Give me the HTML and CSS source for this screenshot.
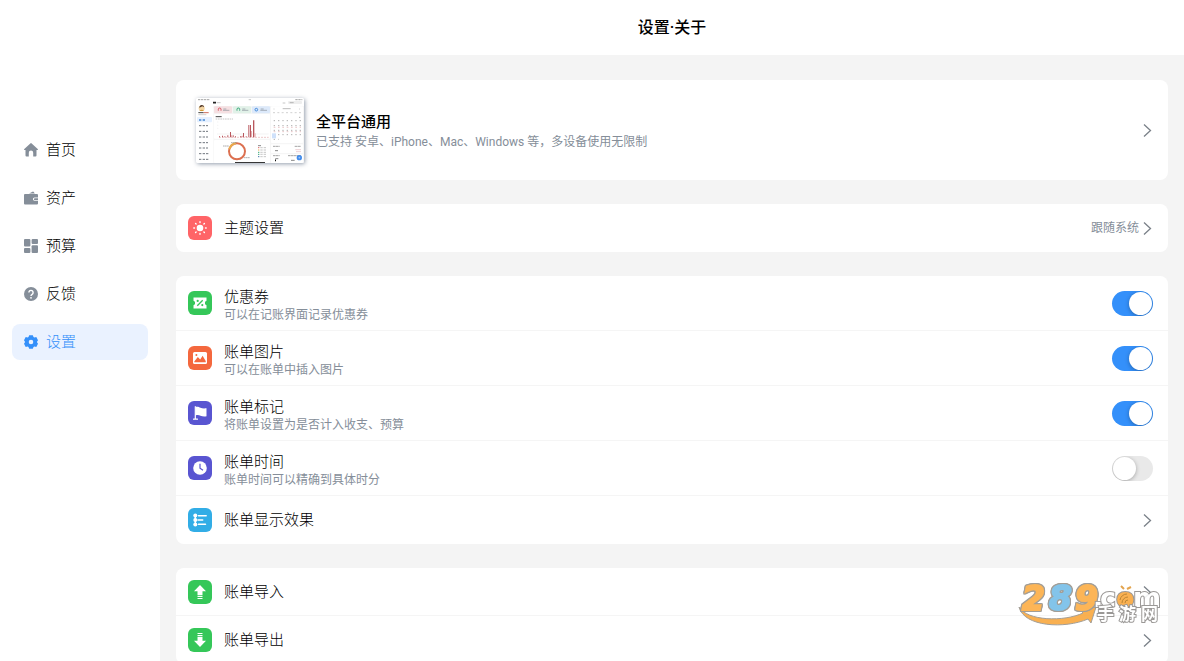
FILE: index.html
```html
<!DOCTYPE html>
<html lang="zh-CN">
<head>
    <meta charset="UTF-8">
    <meta name="viewport" content="width=device-width, initial-scale=1.0">
    <title>设置·关于</title>
    <link rel="stylesheet" href="styles.css">
</head>
<body>
    <!-- Shared arrow -->
    <svg class="defs" width="0" height="0" aria-hidden="true">
        <symbol id="chevron" viewBox="0 0 14 16">
            <path d="M5 2.500l6.500 6L5 14.500" fill="none" stroke="#7a8088" stroke-width="1.300"/>
        </symbol>
    </svg>

    <!-- Sidebar -->
    <nav class="sidebar">
        <a class="nav-item" href="#">
            <svg class="nav-icon" viewBox="0 0 14 14" fill="currentColor"><path d="M6.300.4a1 1 0 0 1 1.400 0l6 5.500c.5.5.2 1.100-.4 1.100h-.8v5.500a1 1 0 0 1-1 1H9.200V9.800a2.200 2.200 0 0 0-4.400 0v3.700H2.500a1 1 0 0 1-1-1V7H.7C.1 7-.2 6.400.3 5.900z"/></svg>
            首页
        </a>
        <a class="nav-item" href="#">
            <svg class="nav-icon" viewBox="0 0 14 14" fill="currentColor"><path d="M5 2.500L8.500.7a1 1 0 0 1 1.300.3l1 1.500z"/><path d="M1 3h12a1 1 0 0 1 1 1v2.500h-3.500a1.600 1.600 0 0 0 0 3.200H14v2.800a1 1 0 0 1-1 1H1a1 1 0 0 1-1-1V4a1 1 0 0 1 1-1z"/><path d="M10.800 7.300H14V9h-3.200a.85.85 0 0 1 0-1.700z"/></svg>
            资产
        </a>
        <a class="nav-item" href="#">
            <svg class="nav-icon" viewBox="0 0 14 14" fill="currentColor"><rect width="6.400" height="7.500" rx="1"/><rect x="7.600" width="6.400" height="5" rx="1"/><rect y="8.900" width="6.400" height="5.100" rx="1"/><rect x="7.600" y="6.300" width="6.400" height="7.700" rx="1"/></svg>
            预算
        </a>
        <a class="nav-item" href="#">
            <svg class="nav-icon" viewBox="0 0 14 14"><circle cx="7" cy="7" r="7" fill="currentColor"/><path d="M4.900 5.500a2.100 2.100 0 1 1 3.200 1.800C7.300 7.800 7 8 7 8.900" fill="none" stroke="#fff" stroke-width="1.400"/><circle cx="7" cy="10.800" r=".9" fill="#fff"/></svg>
            反馈
        </a>
        <a class="nav-item active" href="#">
            <svg class="nav-icon" viewBox="0 0 14 14" fill="currentColor"><path fill-rule="evenodd" d="M5.200.2h3.600l.7 1.700.9.500 1.900-.3 1.700 3.100L12.900 7l1.100 1.800-1.700 3.100-1.900-.3-.9.500-.7 1.700H5.200l-.7-1.700-.9-.5-1.900.3L0 8.800 1.100 7 0 5.200l1.700-3.100 1.900.3.900-.5zM7 4.700a2.300 2.300 0 1 0 0 4.600 2.300 2.300 0 0 0 0-4.600z"/></svg>
            设置
        </a>
    </nav>

    <div class="page">
        <header class="page-header">
            <h1>设置·关于</h1>
        </header>

        <main class="content">
            <!-- Platforms -->
            <section class="card">
                <a class="platform" href="#">
                    <svg class="preview" viewBox="0 0 324 195" aria-hidden="true">
                        <rect width="324" height="195" fill="#fff"/>
                        <path d="M52 24h272v171H52z" fill="#f6f6f6"/>
                        <g fill="#fff"><rect x="54" y="48" width="168" height="74" rx="3"/><rect x="54" y="126" width="168" height="69" rx="3"/><rect x="225" y="25" width="96" height="110" rx="3"/><rect x="225" y="139" width="96" height="26" rx="3"/><rect x="225" y="169" width="96" height="26" rx="3"/></g>
                        <path d="M6 5h36M298 5h21" stroke="#777" stroke-width="2" stroke-dasharray="7 2"/>
                        <path d="M158 5h7M62 14h12M260 15h8" stroke="#aaa" stroke-width="2"/>
                        <path d="M51 14h9" stroke="#222" stroke-width="5"/>
                        <rect x="276" y="9" width="42" height="9" rx="3" fill="#eee"/>
                        <path d="M281 14h12" stroke="#999" stroke-width="2"/>
                        <!-- profile and menu -->
                        <circle cx="17" cy="31" r="9" fill="#f2d4a2"/>
                        <path d="M10 29c0-10 14-10 14-1l-5-3z" fill="#4b3328"/>
                        <path d="M10 39q7-7 14 0z" fill="#d79b32"/>
                        <path d="M7 44h16" stroke="#444" stroke-width="3"/><path d="M23 44h15" stroke="#cf6c5b" stroke-width="3"/><path d="M7 50h24" stroke="#bbb" stroke-width="2"/>
                        <rect x="3" y="57" width="45" height="16" rx="3" fill="#e5f0ff"/>
                        <path d="M9 66h7m4 0h7" stroke="#4488d5" stroke-width="4"/>
                        <path d="M9 83h7m4 0h16M9 100h7m4 0h16M9 117h7m4 0h16M9 134h7m4 0h16M9 150h7m4 0h16M9 167h7m4 0h20M9 184h7m4 0h17" stroke="#70767e" stroke-width="3" stroke-dasharray="7 3"/>
                        <!-- totals -->
                        <rect x="54" y="25" width="54" height="21" rx="3" fill="#f5e0e2"/><rect x="111" y="25" width="54" height="21" rx="3" fill="#e1f1e8"/><rect x="168" y="25" width="54" height="21" rx="3" fill="#dce9fa"/>
                        <g fill="none" stroke-width="3"><path d="M67 38v-4a4 4 0 0 1 8 0v4" stroke="#d65461"/><path d="M123 38v-4a4 4 0 0 1 8 0v4" stroke="#35a877"/><circle cx="181" cy="35" r="4" stroke="#458bdc"/></g>
                        <path d="M82 33h9m-10 4h19M139 33h9m-10 4h19M194 33h9m-10 4h20" stroke="#89919a" stroke-width="2"/>
                        <!-- bars -->
                        <path d="M59 56h18" stroke="#444" stroke-width="3"/><path d="M59 63h52" stroke="#aaa" stroke-width="2" stroke-dasharray="5 2"/>
                        <path d="M63 72h4M63 82h4M63 91h4M63 108h4M68 108h150" stroke="#ddd" stroke-width="1"/>
                        <path d="M69 118h149" stroke="#ecc9ca" stroke-width="3" stroke-dasharray="6 3"/>
                        <g fill="#b9575d"><path d="M69 115h3v3h-3zM78 113h3v5h-3zM85 115h3v3h-3zM94 112h3v6h-3zM102 102h3v16h-3zM110 112h3v6h-3zM117 115h3v3h-3zM132 115h5v3h-5zM141 105h3v13h-3zM149 115h3v3h-3zM157 81h3v37h-3zM162 81h3v37h-3zM171 67h4v51h-4z"/></g>
                        <path d="M105 112h3v6h-3zM137 113h4v5h-4zM165 99h3v19h-3zM175 106h4v12h-4z" fill="#e6b0b3"/>
                        <!-- ring -->
                        <circle cx="123" cy="160" r="24" fill="none" stroke="#dc7050" stroke-width="6"/>
                        <path d="M100 154a24 24 0 0 1 20-18" fill="none" stroke="#e9ac4d" stroke-width="6"/>
                        <path d="M81 144h18M105 134h18M144 179h17" stroke="#888" stroke-width="2" stroke-dasharray="5 1"/>
                        <g stroke-width="3"><path d="M186 143h9" stroke="#888"/><path d="M186 149h4" stroke="#d66"/><path d="M186 156h4" stroke="#e9ac4d"/><path d="M186 163h4" stroke="#39a679"/><path d="M186 169h4" stroke="#39a679"/><path d="M186 176h4" stroke="#4371a8"/></g>
                        <path d="M193 149h20M193 156h20M193 163h20M193 169h20M193 176h20" stroke="#aaa" stroke-width="2" stroke-dasharray="7 3"/>
                        <!-- calendar -->
                        <path d="M260 32h24M233 33h2M309 33h2" stroke="#999" stroke-width="2"/>
                        <path d="M231 44h86" stroke="#bbb" stroke-width="2" stroke-dasharray="6 7"/>
                        <path d="M309 58h5M233 68h82M233 83h82M233 97h82M233 110h82M233 124h15" stroke="#888" stroke-width="2" stroke-dasharray="4 9"/>
                        <path d="M233 88h82M233 101h82" stroke="#dfabad" stroke-width="2" stroke-dasharray="5 8"/>
                        <rect x="228" y="106" width="12" height="15" fill="#cfe1fa"/>
                        <path d="M231 145h20M296 145h19M231 173h20M276 173h39" stroke="#777" stroke-width="2" stroke-dasharray="8 1"/>
                        <path d="M237 158h9M285 187h11M238 182h9" stroke="#888" stroke-width="3"/><path d="M298 155h17M300 161h15" stroke="#e3b6bc" stroke-width="2"/>
                        <path d="M237 187h3" stroke="#111" stroke-width="5"/>
                        <circle cx="310" cy="179" r="8" fill="#428cec"/><path d="M307 179h6M310 176v6" stroke="#fff"/>
                        <path d="M117 194h90" stroke="#111" stroke-width="3"/>
                    </svg>
                    <span class="row-text">
                        <strong class="platform-title">全平台通用</strong>
                        <small class="row-note">已支持 安卓、iPhone、Mac、Windows 等，多设备使用无限制</small>
                    </span>
                    <svg class="arrow"><use href="#chevron"/></svg>
                </a>
            </section>

            <!-- Theme -->
            <section class="card">
                <a class="row" href="#">
                    <svg class="icon red" viewBox="0 0 24 24"><circle cx="12" cy="12" r="3.300" fill="#fff"/><g stroke="#fff" stroke-width="1.400" stroke-linecap="round"><path d="M12 5.800v.7M12 17.500v.7M5.800 12h.7M17.500 12h.7M7.600 7.600l.5.5M15.900 15.900l.5.5M7.600 16.400l.5-.5M15.900 8.100l.5-.5"/></g></svg>
                    <span class="row-title">主题设置</span>
                    <span class="row-value">跟随系统</span>
                    <svg class="arrow"><use href="#chevron"/></svg>
                </a>
            </section>

            <!-- Bill options -->
            <section class="card">
                <div class="row row-tall">
                    <svg class="icon green" viewBox="0 0 24 24"><path d="M5.500 6.500h13v3.300a2.300 2.300 0 0 0 0 4.400v3.300h-13v-3.300a2.300 2.300 0 0 0 0-4.400z" fill="#fff"/><path d="M9.300 14.700l5.400-5.400" stroke="#35c759" stroke-width="1.300"/><g fill="#35c759"><circle cx="9.700" cy="9.900" r="1.100"/><circle cx="14.300" cy="14.100" r="1.100"/></g></svg>
                    <label class="row-text" for="coupon">
                        <span class="row-title">优惠券</span>
                        <small class="row-note">可以在记账界面记录优惠券</small>
                    </label>
                    <input class="switch" type="checkbox" id="coupon" checked>
                </div>
                <div class="row row-tall">
                    <svg class="icon orange" viewBox="0 0 24 24"><rect x="5" y="6" width="14" height="12" rx="1.500" fill="#fff"/><path d="M6.300 15.500l3.500-4.600 2.400 2.600 2.400-3.800 3.100 5.300v1.200H6.300z" fill="#f4683e"/><circle cx="8.400" cy="9" r="1" fill="#f4683e"/></svg>
                    <label class="row-text" for="picture">
                        <span class="row-title">账单图片</span>
                        <small class="row-note">可以在账单中插入图片</small>
                    </label>
                    <input class="switch" type="checkbox" id="picture" checked>
                </div>
                <div class="row row-tall">
                    <svg class="icon purple" viewBox="0 0 24 24"><path d="M7.300 5.700v12.500M5.500 18.200h4" stroke="#fff" stroke-width="1.200" stroke-linecap="round"/><path d="M7.500 6c2-.8 3.500.1 5 .8s3.500.8 6 .5v8c-2.500.6-4.500.1-6-.6s-3-1-5-.2z" fill="#fff"/></svg>
                    <label class="row-text" for="mark">
                        <span class="row-title">账单标记</span>
                        <small class="row-note">将账单设置为是否计入收支、预算</small>
                    </label>
                    <input class="switch" type="checkbox" id="mark" checked>
                </div>
                <div class="row row-tall">
                    <svg class="icon purple" viewBox="0 0 24 24"><circle cx="12" cy="12" r="6.800" fill="#fff"/><path d="M12 7.800v4.400l3 2" fill="none" stroke="#5955d1" stroke-width="1.200"/></svg>
                    <label class="row-text" for="time">
                        <span class="row-title">账单时间</span>
                        <small class="row-note">账单时间可以精确到具体时分</small>
                    </label>
                    <input class="switch" type="checkbox" id="time">
                </div>
                <a class="row" href="#">
                    <svg class="icon blue" viewBox="0 0 24 24"><g fill="#fff"><circle cx="7.300" cy="7.500" r="2"/><circle cx="7.300" cy="12" r="2"/><circle cx="7.300" cy="16.500" r="2"/></g><path d="M7.300 7.500v9M10.500 7.800h7.700M10 12h4.700M10.500 16.300h7" stroke="#fff" stroke-width="1.500" stroke-linecap="round"/></svg>
                    <span class="row-title">账单显示效果</span>
                    <svg class="arrow"><use href="#chevron"/></svg>
                </a>
            </section>

            <!-- Import and export -->
            <section class="card">
                <a class="row" href="#">
                    <svg class="icon green" viewBox="0 0 24 24"><path d="M12 5l6 6.200h-3.500V15h-5v-3.800H6z" fill="#fff"/><path d="M9.500 16.400h5M9.500 18.500h5" stroke="#fff" stroke-width="1.100"/></svg>
                    <span class="row-title">账单导入</span>
                    <svg class="arrow"><use href="#chevron"/></svg>
                </a>
                <a class="row" href="#">
                    <svg class="icon green" viewBox="0 0 24 24"><path d="M12 19l6-6.200h-3.500V9h-5v3.800H6z" fill="#fff"/><path d="M9.500 7.600h5M9.500 5.500h5" stroke="#fff" stroke-width="1.100"/></svg>
                    <span class="row-title">账单导出</span>
                    <svg class="arrow"><use href="#chevron"/></svg>
                </a>
            </section>
        </main>
    </div>

    <!-- Site mark -->
    <svg class="site-mark" viewBox="-4 -14 152 66">
        <path d="M1 24c8 14 45 15 64 6l-3-3 16-3-5 16-3-4C47 46 6 44 1 24z" fill="#f9a83f" stroke="#99948c"/>
        <g class="mark-number">
            <text class="gold" x="4" y="27">2</text>
            <text class="sky" x="31" y="27">8</text>
            <text class="gold" x="57" y="27">9</text>
        </g>
        <g class="mark-domain">
            <text x="75" y="24">.</text>
            <text x="82" y="24">c</text>
            <text class="gold" x="98" y="24">o</text>
            <text x="115" y="24">m</text>
        </g>
        <circle cx="107" cy="17" r="6" fill="#f9a83f"/>
        <path d="M107 20a3 3 0 0 1 3-3M104 20a6 6 0 0 1 6-6M102 17a7 7 0 0 1 7-6" fill="none" stroke="#b5791f"/>
        <path d="M106 6l-3-3M109 6l4-2" fill="none" stroke="#e09b3d" stroke-width="2"/>
        <g class="mark-name">
            <text x="79" y="37">手</text>
            <text x="101" y="37">游</text>
            <text x="123" y="37">网</text>
        </g>
    </svg>
</body>
</html>
```

FILE: styles.css
```css
* {
    box-sizing: border-box;
}
body {
    margin: 0;
    height: 100vh;
    display: flex;
    overflow: hidden;
    background: #fff;
    color: #000;
    font-family: Roboto, "Noto Sans CJK SC", sans-serif;
    font-size: 15px;
}
a {
    color: inherit;
    text-decoration: none;
}
.defs {
    position: absolute;
}

/* Sidebar */
.sidebar {
    width: 160px;
    flex-shrink: 0;
    padding: 132px 12px 0;
    display: flex;
    flex-direction: column;
    gap: 12px;
}
.nav-item {
    height: 36px;
    padding: 0 12px;
    display: flex;
    align-items: center;
    gap: 8px;
    border-radius: 8px;
    font-weight: 300;
    line-height: 20px;
}
.nav-icon {
    width: 14px;
    height: 14px;
    color: #858e99;
}
.active {
    background: #eaf2ff;
    color: #3490fa;
}
.active .nav-icon {
    color: #3490fa;
}

/* Page */
.page {
    flex: 1;
    min-width: 0;
    display: flex;
    flex-direction: column;
}
.page-header {
    height: 55px;
    flex-shrink: 0;
    display: flex;
    align-items: center;
    justify-content: center;
}
h1 {
    margin: 0;
    font-size: 16px;
    font-weight: 500;
    line-height: 20px;
}
.content {
    flex: 1;
    min-height: 0;
    overflow: hidden;
    padding: 25px 16px 0;
    background: #f4f4f4;
}
.card {
    margin-bottom: 24px;
    background: #fff;
    border-radius: 8px;
}

/* Rows */
.platform {
    height: 100px;
    padding: 0 15px 0 20px;
    display: flex;
    align-items: center;
    gap: 12px;
}
.preview {
    width: 108px;
    height: 65px;
    border-radius: 2px;
    box-shadow: 1px 1px 4px rgba(40, 60, 90, 0.5);
}
.platform-title {
    font-weight: 500;
    line-height: 24px;
}
.row {
    height: 48px;
    padding: 0 15px 0 12px;
    display: flex;
    align-items: center;
    gap: 12px;
}
.row-tall {
    height: 55px;
}
.row-tall .row-text {
    padding-top: 4px;
}
.row:not(:last-child) {
    border-bottom: 1px solid #f5f5f5;
}
.row-text {
    flex: 1;
    display: flex;
    flex-direction: column;
}
.row-title {
    flex: 1;
    line-height: 20px;
    font-weight: 300;
}
.row-note {
    font-size: 12px;
    line-height: 16px;
    color: #858e99;
}
.row-value {
    margin-right: -12px;
    font-size: 12px;
    line-height: 16px;
    color: #858e99;
}
.arrow {
    width: 14px;
    height: 16px;
}
.icon {
    width: 24px;
    height: 24px;
    border-radius: 6px;
}
.red { background: #ff6467; }
.green { background: #35c759; }
.orange { background: #f4683e; }
.purple { background: #5955d1; }
.blue { background: #32ade6; }

.switch {
    appearance: none;
    width: 41px;
    height: 25px;
    margin: 0;
    padding: 1px;
    display: flex;
    overflow: hidden;
    border-radius: 13px;
    background: #e9e9e9;
    cursor: pointer;
}
.switch::before {
    content: "";
    width: 23px;
    height: 23px;
    border-radius: 50%;
    background: #fff;
    box-shadow: 0 1px 4px rgba(0, 0, 0, 0.3);
}
.switch:checked {
    background: #3490fa;
    justify-content: flex-end;
}

/* Site mark */
.site-mark {
    position: absolute;
    right: 18px;
    bottom: 26px;
    width: 152px;
    height: 66px;
    opacity: 0.9;
    pointer-events: none;
}
.mark-number {
    font: italic bold 33px "DejaVu Sans", sans-serif;
    stroke-width: 2px;
    filter: drop-shadow(1px 0 #99948c) drop-shadow(-1px 0 #99948c) drop-shadow(0 1px #99948c) drop-shadow(0 -1px #99948c);
}
.mark-domain {
    font: bold 27px "DejaVu Sans", sans-serif;
}
.mark-name {
    font: bold 17px "Noto Sans CJK SC", sans-serif;
}
.mark-domain text,
.mark-name text {
    fill: #fff;
    stroke: #908d8b;
    stroke-width: 2px;
    paint-order: stroke;
}
.mark-number .gold {
    fill: #fcae45;
    stroke: #fcae45;
}
.mark-number .sky {
    fill: #76bee8;
    stroke: #76bee8;
}
.mark-domain .gold {
    fill: #f9a83f;
}
```
